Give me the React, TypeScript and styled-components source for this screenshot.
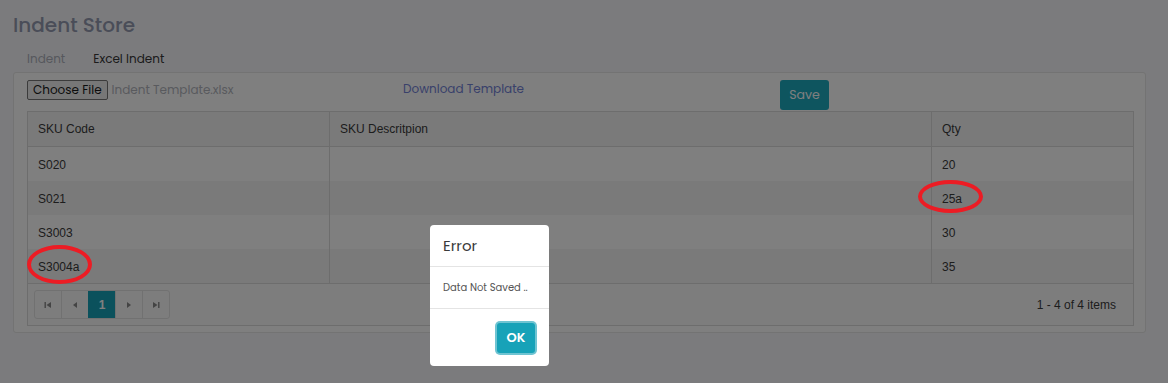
import * as React from 'react';
import styled, { createGlobalStyle } from 'styled-components';

const GlobalStyle = createGlobalStyle`
  html, body {
    margin: 0;
    padding: 0;
    background: #f6f7fb;
    font-family: "Poppins", "Open Sans", "Noto Sans", sans-serif;
  }
`;

const Page = styled.div`
  position: relative;
  width: 1168px;
  height: 383px;
  padding: 13px 22px 0 13px;
  box-sizing: border-box;
  overflow: hidden;
`;

const PageTitle = styled.h2`
  margin: 0;
  font-size: 20px;
  line-height: 24px;
  font-weight: 500;
  color: #949ab0;
`;

const Tabs = styled.div`
  display: flex;
  gap: 28px;
  margin-top: 9px;
  padding-left: 14px;
  height: 26px;
  align-items: center;
`;

const Tab = styled.div<{ $active?: boolean }>`
  min-width: 36px;
  font-size: 12px;
  color: ${p => (p.$active ? '#383838' : '#aeb1ba')};
`;

const Panel = styled.div`
  background: #fff;
  border: 1px solid #e6e6e6;
  border-radius: 3px;
  padding: 7px 12px 6px 13px;
`;

const Toolbar = styled.div`
  display: grid;
  grid-template-columns: 376px 377px auto;
  height: 31px;
  align-items: start;
  font-size: 12px;
  line-height: 16px;
`;

const FileRow = styled.div`
  display: flex;
  align-items: center;
  gap: 4px;
`;

const FileButton = styled.button`
  height: 20px;
  padding: 0 5px;
  font-family: inherit;
  font-size: 12px;
  color: #1a1a1a;
  background: #efefef;
  border: 1px solid #767676;
  border-radius: 2px;
`;

const FileName = styled.span`
  color: #b2b5bd;
`;

const DownloadCell = styled.div`
  padding-top: 1px;
`;

const DownloadLink = styled.a`
  color: #7282d6;
  text-decoration: none;
`;

const SaveButton = styled.button`
  width: 49px;
  height: 30px;
  font-family: inherit;
  font-size: 12.5px;
  color: #fff;
  background: #1caabf;
  border: none;
  border-radius: 3px;
  padding: 0;
`;

const Table = styled.table`
  width: 1106px;
  border-collapse: collapse;
  table-layout: fixed;
  font-family: "Liberation Sans", Arial, sans-serif;
  font-size: 12px;
  color: #3a3a3a;
  border: 1px solid #dadada;
`;

const Th = styled.th<{ $w: number }>`
  width: ${p => p.$w - 21}px;
  height: 34px;
  padding: 0 10px;
  text-align: left;
  font-weight: 400;
  background: #f4f4f4;
  border: 1px solid #dadada;
`;

const Row = styled.tr<{ $alt?: boolean }>`
  background: ${p => (p.$alt ? '#f4f4f4' : '#fff')};
`;

const Td = styled.td`
  height: 33px;
  padding: 1px 10px 0;
  border-left: 1px solid #dadada;
  border-right: 1px solid #dadada;
`;

const PagerCell = styled.td`
  background: #fbfbfb;
  border-top: 1px solid #dadada;
  padding: 6px 17px 6px 6px;
  height: 27px;
`;

const PagerRow = styled.div`
  display: flex;
  justify-content: space-between;
  align-items: center;
`;

const Pager = styled.div`
  display: flex;
  border: 1px solid #e2e2e2;
  border-radius: 3px;
  overflow: hidden;
`;

const PageBtn = styled.div<{ $active?: boolean }>`
  width: 26px;
  height: 27px;
  display: flex;
  align-items: center;
  justify-content: center;
  font-size: 12px;
  font-weight: 700;
  color: #fff;
  background: ${p => (p.$active ? '#17a2b8' : 'transparent')};
  border-left: 1px solid ${p => (p.$active ? '#17a2b8' : '#e2e2e2')};
  &:first-child {
    border-left: none;
  }
`;

const PagerInfo = styled.span`
  color: #3a3a3a;
`;

const Backdrop = styled.div`
  position: absolute;
  inset: 0;
  background: rgba(0, 0, 0, 0.5);
`;

const Modal = styled.div`
  position: absolute;
  left: 430px;
  top: 225px;
  width: 119px;
  height: 141px;
  background: #fff;
  border-radius: 4px;
  display: flex;
  flex-direction: column;
`;

const ModalHeader = styled.div`
  height: 41px;
  display: flex;
  align-items: center;
  padding: 0 13px;
  font-size: 15px;
  color: #3a3a3a;
  border-bottom: 1px solid #e4e4e4;
`;

const ModalBody = styled.div`
  height: 41px;
  display: flex;
  align-items: center;
  padding: 0 13px;
  font-size: 10px;
  color: #555;
  border-bottom: 1px solid #e4e4e4;
`;

const ModalFooter = styled.div`
  flex: 1;
  display: flex;
  justify-content: flex-end;
  align-items: flex-start;
  padding: 14px 14px 0 0;
`;

const OkButton = styled.button`
  width: 38px;
  height: 30px;
  padding: 0;
  font-family: inherit;
  font-size: 13px;
  font-weight: 600;
  color: #fff;
  background: #17a2b8;
  border: none;
  border-radius: 3px;
  box-shadow: 0 0 0 2px rgba(95, 190, 205, 0.9);
`;

const Annotation = styled.div<{ $x: number; $y: number; $w: number; $h: number }>`
  position: absolute;
  left: ${p => p.$x}px;
  top: ${p => p.$y}px;
  width: ${p => p.$w}px;
  height: ${p => p.$h}px;
  box-sizing: border-box;
  border: 4px solid #ec1c24;
  border-radius: 50%;
`;

const Tri: React.FC<{ dir: 'l' | 'r'; bar?: boolean }> = ({ dir, bar }) => (
  <svg width="8" height="8" viewBox="0 0 8 8">
    {dir === 'l' ? (
      <>
        {bar && <rect x="0.5" y="1" width="1.4" height="6" fill="#888" />}
        <polygon points={bar ? '7,1 2.5,4 7,7' : '6,1 2,4 6,7'} fill="#888" />
      </>
    ) : (
      <>
        <polygon points={bar ? '1,1 5.5,4 1,7' : '2,1 6,4 2,7'} fill="#888" />
        {bar && <rect x="6.1" y="1" width="1.4" height="6" fill="#888" />}
      </>
    )}
  </svg>
);

const rows = [
  { code: 'S020', desc: '', qty: '20' },
  { code: 'S021', desc: '', qty: '25a' },
  { code: 'S3003', desc: '', qty: '30' },
  { code: 'S3004a', desc: '', qty: '35' },
];

export default function App() {
  return (
    <>
      <GlobalStyle />
      <Page>
        <PageTitle>Indent Store</PageTitle>
        <Tabs>
          <Tab>Indent</Tab>
          <Tab $active>Excel Indent</Tab>
        </Tabs>
        <Panel>
          <Toolbar>
            <FileRow>
              <FileButton>Choose File</FileButton>
              <FileName>Indent Template.xlsx</FileName>
            </FileRow>
            <DownloadCell>
              <DownloadLink href="#">Download Template</DownloadLink>
            </DownloadCell>
            <div>
              <SaveButton>Save</SaveButton>
            </div>
          </Toolbar>
          <Table>
            <thead>
              <tr>
                <Th $w={302}>SKU Code</Th>
                <Th $w={602}>SKU Descritpion</Th>
                <Th $w={202}>Qty</Th>
              </tr>
            </thead>
            <tbody>
              {rows.map((r, i) => (
                <Row key={r.code} $alt={i % 2 === 1}>
                  <Td>{r.code}</Td>
                  <Td>{r.desc}</Td>
                  <Td>{r.qty}</Td>
                </Row>
              ))}
              <tr>
                <PagerCell colSpan={3}>
                  <PagerRow>
                    <Pager>
                      <PageBtn><Tri dir="l" bar /></PageBtn>
                      <PageBtn><Tri dir="l" /></PageBtn>
                      <PageBtn $active>1</PageBtn>
                      <PageBtn><Tri dir="r" /></PageBtn>
                      <PageBtn><Tri dir="r" bar /></PageBtn>
                    </Pager>
                    <PagerInfo>1 - 4 of 4 items</PagerInfo>
                  </PagerRow>
                </PagerCell>
              </tr>
            </tbody>
          </Table>
        </Panel>
        <Backdrop />
        <Modal>
          <ModalHeader>Error</ModalHeader>
          <ModalBody>Data Not Saved ..</ModalBody>
          <ModalFooter>
            <OkButton>OK</OkButton>
          </ModalFooter>
        </Modal>
        <Annotation $x={27} $y={245} $w={65} $h={39} />
        <Annotation $x={918} $y={180} $w={65} $h={33} />
      </Page>
    </>
  );
}
